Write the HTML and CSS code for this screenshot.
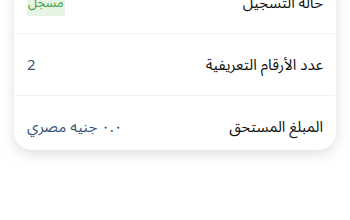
FILE: index.html
```html
<!DOCTYPE html>
<html lang="ar" dir="rtl">
<head>
<meta charset="utf-8">
<link rel="stylesheet" href="styles.css">
</head>
<body>
<div class="card">
  <div class="row">
    <span class="label">حالة التسجيل</span>
    <span class="badge">مسجل</span>
  </div>
  <div class="row">
    <span class="label">عدد الأرقام التعريفية</span>
    <span class="value">2</span>
  </div>
  <div class="row last">
    <span class="label">المبلغ المستحق</span>
    <span class="value">٠.٠ جنيه مصري</span>
  </div>
</div>
</body>
</html>
```
FILE: styles.css
```css
html, body {
  margin: 0;
  padding: 0;
  background: #ffffff;
  overflow: hidden;
}
body {
  font-family: "Noto Sans Arabic", "Noto Naskh Arabic", "Noto Sans", "DejaVu Sans", sans-serif;
  width: 350px;
  height: 220px;
}
.card {
  margin: -28px 14px 0 14px;
  background: #ffffff;
  border-radius: 18px;
  box-shadow: 0 4px 14px rgba(0, 0, 0, 0.13);
  padding: 0 1px;
}
.row {
  display: flex;
  align-items: center;
  justify-content: space-between;
  height: 62px;
  padding: 0 12px;
  border-bottom: 1px solid #f2f2f2;
  box-sizing: border-box;
}
.row.last {
  border-bottom: none;
  height: 54px;
  align-items: flex-start;
  padding-top: 20px;
}
.label {
  font-size: 15px;
  color: #111111;
  line-height: 22px;
}
.value {
  font-size: 15px;
  color: #3a5578;
  line-height: 22px;
}
.badge {
  font-size: 13px;
  color: #43a047;
  background: #e6f4e3;
  padding: 3px 1px;
  line-height: 20px;
}
```
